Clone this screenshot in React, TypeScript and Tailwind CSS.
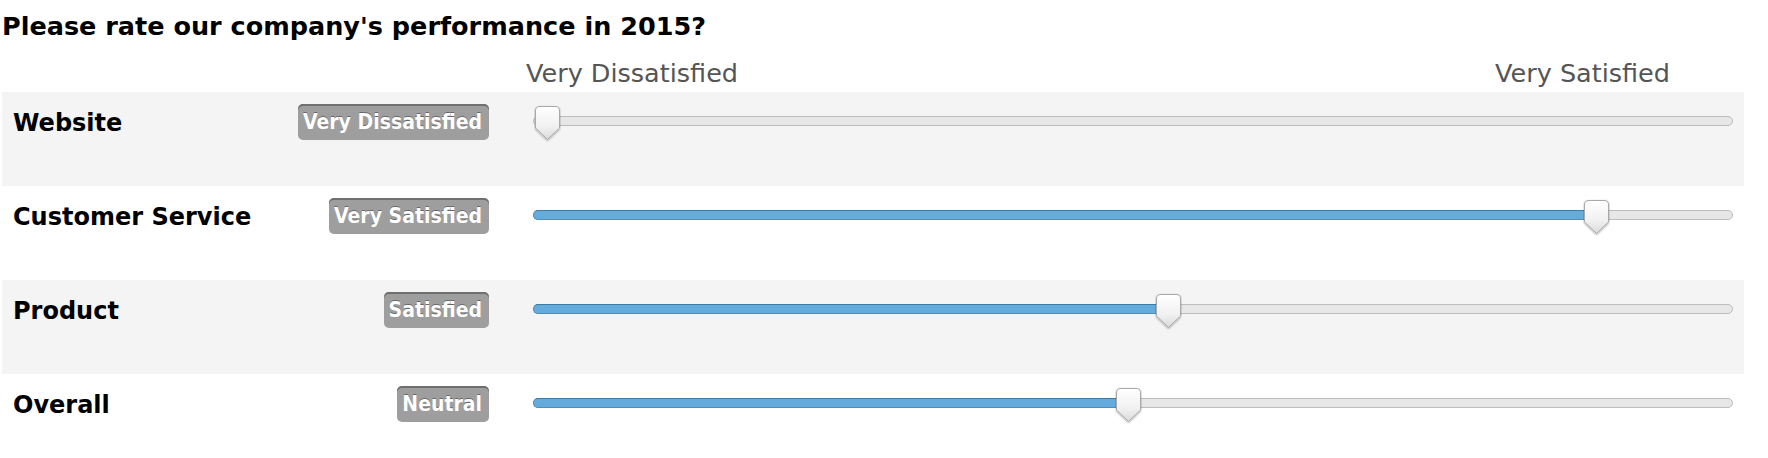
import React from 'react';

interface RatingRow {
  label: string;
  answer: string;
  value: number; // 0..1
}

const rows: RatingRow[] = [
  { label: 'Website', answer: 'Very Dissatisfied', value: 0 },
  { label: 'Customer Service', answer: 'Very Satisfied', value: 0.896 },
  { label: 'Product', answer: 'Satisfied', value: 0.53 },
  { label: 'Overall', answer: 'Neutral', value: 0.496 },
];

const Thumb: React.FC = () => (
  <svg width="27" height="37" viewBox="0 0 27 37" className="block">
    <defs>
      <linearGradient id="thumbFill" x1="0" y1="0" x2="0" y2="1">
        <stop offset="0" stopColor="#ffffff" />
        <stop offset="0.6" stopColor="#f1f1f1" />
        <stop offset="1" stopColor="#dadada" />
      </linearGradient>
      <filter id="thumbShadow" x="-30%" y="-20%" width="160%" height="150%">
        <feDropShadow dx="0" dy="1" stdDeviation="1.1" floodColor="#000" floodOpacity="0.35" />
      </filter>
    </defs>
    <path
      d="M5 1.5 H22 Q25.5 1.5 25.5 5 V23 L13.5 34.5 L1.5 23 V5 Q1.5 1.5 5 1.5 Z"
      fill="url(#thumbFill)"
      stroke="#a9a9a9"
      strokeWidth="1"
      filter="url(#thumbShadow)"
    />
  </svg>
);

const Slider: React.FC<{ value: number }> = ({ value }) => {
  const pos = `calc((100% - 29px) * ${value} + 2px)`;
  return (
    <div className="relative w-[1200px] h-[10px] mt-[24px]">
      <div className="absolute inset-0 rounded-full bg-[#e7e7e7] border border-[#bcbcbc]" />
      {value > 0 && (
        <div
          className="absolute top-0 left-0 h-[10px] rounded-l-full bg-[#64acdc] border border-[#4a8fc0] border-t-[#3e7aa6] border-r-0"
          style={{ width: `calc(${pos} + 13px)` }}
        />
      )}
      <div className="absolute top-[-11px]" style={{ left: `calc(${pos} - 1px)` }}>
        <Thumb />
      </div>
    </div>
  );
};

export default function App() {
  return (
    <div className="w-[1768px] h-[458px] overflow-hidden bg-white font-['DejaVu_Sans',sans-serif]">
      <div className="w-[1744px] pl-[2px] pt-[12px]">
        <h1 className="text-[25.5px] leading-[28px] font-bold text-black">
          Please rate our company's performance in 2015?
        </h1>
        <div className="flex justify-between pl-[524px] pr-[74px] mt-[18px] text-[25.5px] leading-[30px] text-[#555555]">
          <span>Very Dissatisfied</span>
          <span>Very Satisfied</span>
        </div>
        <div className="mt-[4px]">
          {rows.map((row, i) => (
            <div
              key={row.label}
              className={`flex h-[94px] pl-[11px] pr-[11px] ${i % 2 === 0 ? 'bg-[#f4f4f4]' : 'bg-white'}`}
            >
              <div className="flex-1 pt-[16px] text-[24px] leading-[30px] font-bold text-black">
                {row.label}
              </div>
              <div className="pt-[12px]">
                <span className="inline-block h-[36px] leading-[36px] pl-[5px] pr-[7px] rounded-[5px] bg-[#9e9e9e] shadow-[inset_0_2px_0_#6f6f6f] text-white text-[21px] font-bold font-['DejaVu_Sans_Condensed','DejaVu_Sans',sans-serif] [text-shadow:0_-1px_0_rgba(0,0,0,0.35)]">
                  {row.answer}
                </span>
              </div>
              <div className="ml-[44px]">
                <Slider value={row.value} />
              </div>
            </div>
          ))}
        </div>
      </div>
    </div>
  );
}
